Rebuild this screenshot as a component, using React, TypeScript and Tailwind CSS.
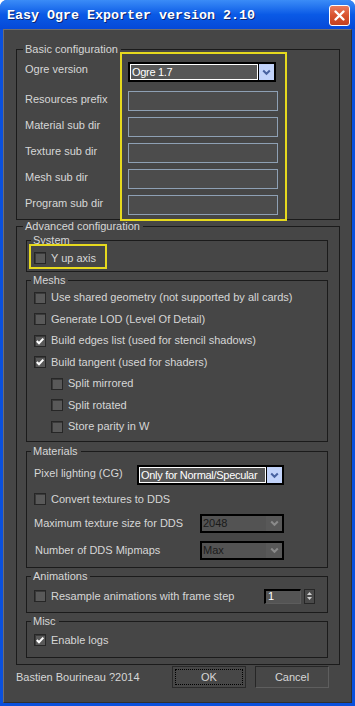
import React from "react";

const FONT = { fontFamily: '"Liberation Sans", Arial, sans-serif' };

function Check({ checked = false }: { checked?: boolean }) {
  return (
    <div className="w-[12px] h-[12px] shrink-0 border border-[#262626] bg-[#595959] shadow-[inset_1px_1px_0_#3a3a3a] flex items-center justify-center">
      {checked && (
        <svg width="10" height="10" viewBox="0 0 10 10">
          <path d="M1.8 5 L4 7.3 L8.3 2.6" stroke="#ffffff" strokeWidth="2" fill="none" />
        </svg>
      )}
    </div>
  );
}

function CheckRow({ label, checked = false, className = "" }: { label: string; checked?: boolean; className?: string }) {
  return (
    <div className={"flex items-center gap-[5px] " + className}>
      <Check checked={checked} />
      <span className="text-[11px] leading-[13px] text-[#d6d6d6] whitespace-nowrap">{label}</span>
    </div>
  );
}

function Group({
  label,
  segClass,
  className = "",
  bodyClass = "",
  children,
}: {
  label: string;
  segClass: string;
  className?: string;
  bodyClass?: string;
  children: React.ReactNode;
}) {
  return (
    <div className={"flex flex-col " + className}>
      <div className="flex h-[12px]">
        <div className={"mt-[6px] border-t border-l border-[#1b1b1b] " + segClass} />
        <span className="pl-[2px] pr-[3px] leading-[12px] text-[11px] text-[#d6d6d6] whitespace-nowrap">{label}</span>
        <div className="flex-1 mt-[6px] border-t border-r border-[#1b1b1b]" />
      </div>
      <div className={"border-l border-r border-b border-[#1b1b1b] " + bodyClass}>{children}</div>
    </div>
  );
}

function Chevron({ color }: { color: string }) {
  return (
    <svg width="9" height="7" viewBox="0 0 9 7">
      <path d="M1.2 1.5 L4.5 4.8 L7.8 1.5" stroke={color} strokeWidth="2" fill="none" />
    </svg>
  );
}

function Dropdown({ value, className }: { value: string; className: string }) {
  return (
    <div className={"flex border-2 border-black bg-black " + className}>
      <div className="flex-1 border border-white bg-[#575757] flex items-center pl-[1px] text-[11px] tracking-[-0.3px] text-white whitespace-nowrap overflow-hidden">
        {value}
      </div>
      <div className="w-[15px] ml-[1px] bg-[#c2d3fa] flex items-center justify-center">
        <Chevron color="#4862a0" />
      </div>
    </div>
  );
}

function DisabledDropdown({ value }: { value: string }) {
  return (
    <div className="flex w-[84px] h-[19px] border-2 border-black bg-black">
      <div className="flex-1 bg-[#535353] flex items-center pl-[1px] text-[11px] text-[#1a1a1a]">{value}</div>
      <div className="w-[16px] bg-[#585858] flex items-center justify-center">
        <Chevron color="#8a8a8a" />
      </div>
    </div>
  );
}

function TextInput() {
  return <div className="w-[150px] h-[20px] border border-[#8ea0b4] bg-[#4c4c4c]" />;
}

export default function App() {
  return (
    <div className="relative w-[355px] h-[706px] flex flex-col bg-[#0a50dc] rounded-t-[7px] overflow-hidden" style={FONT}>
      {/* Title bar */}
      <div className="h-[29px] shrink-0 flex bg-gradient-to-b from-[#3b8cf7] via-[#0a5ae6] to-[#0649d8]">
        <div className="flex-1 flex items-center pl-[7px] pt-[3px]">
          <span
            className="text-[13.33px] font-bold text-white whitespace-nowrap [text-shadow:1px_1px_0_#0b2570]"
            style={{ fontFamily: '"Liberation Mono", "Courier New", monospace' }}
          >
            Easy Ogre Exporter version 2.10
          </span>
        </div>
        <div className="mt-[5px] mr-[5px] w-[21px] h-[21px] rounded-[3px] border border-white bg-gradient-to-b from-[#e87a5e] via-[#d9532f] to-[#c2401f] flex items-center justify-center">
          <svg width="13" height="13" viewBox="0 0 13 13">
            <path d="M2.5 2.5 L10.5 10.5 M10.5 2.5 L2.5 10.5" stroke="#ffffff" strokeWidth="2.4" strokeLinecap="round" />
          </svg>
        </div>
      </div>

      {/* Content panel */}
      <div className="mx-[3px] h-[674px] shrink-0 border border-[#6e6e6e] border-r-[#303030] border-b-[#303030] bg-[#464646] flex flex-col">
        {/* Basic configuration */}
        <Group label="Basic configuration" segClass="w-[7px]" className="mt-[13px] ml-[12px] mr-[11px]" bodyClass="pl-[8px] pt-[7px] pb-[4px]">
          <div className="flex flex-col gap-[6px]">
            <div className="flex items-center h-[20px] mb-[3px]">
              <span className="w-[103px] text-[11px] leading-[13px] text-[#d6d6d6] -mt-[5px]">Ogre version</span>
              <Dropdown value="Ogre 1.7" className="w-[148px] h-[20px]" />
            </div>
            {["Resources prefix", "Material sub dir", "Texture sub dir", "Mesh sub dir", "Program sub dir"].map((l) => (
              <div key={l} className="flex items-center h-[20px]">
                <span className="w-[103px] text-[11px] leading-[13px] text-[#d6d6d6] -mt-[3px]">{l}</span>
                <TextInput />
              </div>
            ))}
          </div>
        </Group>

        {/* Advanced configuration */}
        <Group label="Advanced configuration" segClass="w-[7px]" className="ml-[12px] mr-[11px]" bodyClass="pl-[9px] pr-[11px] pt-[2px] pb-[6px]">
          <Group label="System" segClass="w-[5px]" bodyClass="pl-[7px] pt-[4px] pb-[5px]">
            <CheckRow label="Y up axis" className="h-[16px]" />
          </Group>

          <Group label="Meshs" segClass="w-[5px]" className="mt-[2px]" bodyClass="pl-[7px] pt-[1px] pb-[3.5px]">
            <CheckRow label="Use shared geometry (not supported by all cards)" className="h-[21.5px]" />
            <CheckRow label="Generate LOD (Level Of Detail)" className="h-[21.5px]" />
            <CheckRow label="Build edges list (used for stencil shadows)" checked className="h-[21.5px]" />
            <CheckRow label="Build tangent (used for shaders)" checked className="h-[21.5px]" />
            <CheckRow label="Split mirrored" className="h-[21.5px] ml-[17px]" />
            <CheckRow label="Split rotated" className="h-[21.5px] ml-[17px]" />
            <CheckRow label="Store parity in W" className="h-[21.5px] ml-[17px]" />
          </Group>

          <Group label="Materials" segClass="w-[5px]" className="mt-[3px]" bodyClass="pl-[7px] pt-[8px] pb-[7px]">
            <div className="flex items-center h-[20px]">
              <span className="w-[103px] text-[11px] leading-[13px] text-[#d6d6d6] -mt-[4px]">Pixel lighting (CG)</span>
              <Dropdown value="Only for Normal/Specular" className="w-[147px] h-[20px]" />
            </div>
            <CheckRow label="Convert textures to DDS" className="h-[20px] mt-[4px]" />
            <div className="flex items-center h-[19px] mt-[5px]">
              <span className="w-[166px] text-[11px] leading-[13px] text-[#d6d6d6]">Maximum texture size for DDS</span>
              <DisabledDropdown value="2048" />
            </div>
            <div className="flex items-center h-[19px] mt-[8px]">
              <span className="w-[166px] pl-[1px] text-[11px] leading-[13px] text-[#d6d6d6]">Number of DDS Mipmaps</span>
              <DisabledDropdown value="Max" />
            </div>
          </Group>

          <Group label="Animations" segClass="w-[5px]" className="mt-[2px]" bodyClass="pl-[7px] pr-[12px] pt-[6px] pb-[8px]">
            <div className="flex items-center h-[16px]">
              <CheckRow label="Resample animations with frame step" />
              <div className="ml-auto flex items-center gap-[3px]">
                <div className="w-[37px] h-[15px] border-t-2 border-l-2 border-black border-r border-b border-r-[#5c5c5c] border-b-[#5c5c5c] bg-[#545454] flex items-center pl-[2px] text-[11px] leading-[11px] text-white">
                  1
                </div>
                <div className="w-[11px] h-[15px] border border-[#262626] bg-[#4a4a4a] flex flex-col items-center justify-center gap-[2px]">
                  <svg width="5" height="3" viewBox="0 0 5 3">
                    <path d="M0 3 L2.5 0 L5 3 Z" fill="#cfcfcf" />
                  </svg>
                  <svg width="5" height="3" viewBox="0 0 5 3">
                    <path d="M0 0 L5 0 L2.5 3 Z" fill="#cfcfcf" />
                  </svg>
                </div>
              </div>
            </div>
          </Group>

          <Group label="Misc" segClass="w-[5px]" className="mt-[2px]" bodyClass="pl-[7px] pt-[5px] pb-[9px]">
            <CheckRow label="Enable logs" checked className="h-[16px]" />
          </Group>
        </Group>

        {/* Footer */}
        <div className="mt-[1px] flex items-center pl-[12px] pr-[22px]">
          <span className="text-[11px] leading-[13px] text-[#d6d6d6] whitespace-nowrap">Bastien Bourineau ?2014</span>
          <div className="ml-auto flex gap-[9px]">
            <div className="w-[74px] h-[22px] border border-[#2a2a2a] bg-[#474747] p-[2px]">
              <div className="w-full h-full border border-dotted border-black flex items-center justify-center text-[11px] text-[#d6d6d6]">
                OK
              </div>
            </div>
            <div className="w-[74px] h-[22px] border border-[#262626] border-r-[#5e5e5e] border-b-[#5e5e5e] bg-[#474747] flex items-center justify-center text-[11px] text-[#d6d6d6]">
              Cancel
            </div>
          </div>
        </div>
      </div>

      {/* Yellow annotation highlights */}
      <div className="absolute left-[120px] top-[52px] w-[167px] h-[169px] border-2 border-[#e6d91e] pointer-events-none" />
      <div className="absolute left-[29px] top-[244px] w-[78px] h-[25px] border-2 border-[#e6d91e] pointer-events-none" />
    </div>
  );
}
